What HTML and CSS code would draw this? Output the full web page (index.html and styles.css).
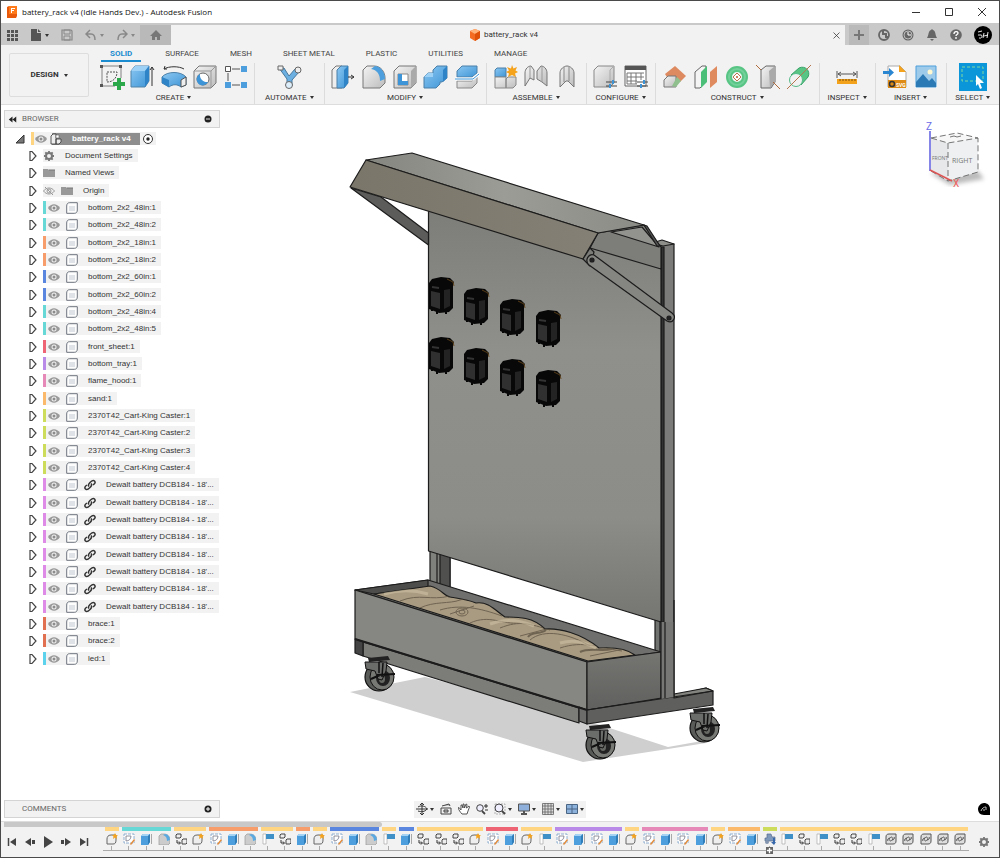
FILE: index.html
```html
<!DOCTYPE html>
<html lang="en">
<head>
  <meta charset="UTF-8">
  <meta name="viewport" content="width=device-width, initial-scale=1.0">
  <title>battery_rack v4 (Idle Hands Dev.) - Autodesk Fusion</title>
  <link rel="stylesheet" href="styles.css">
</head>
<body>

<!-- Icon sprite -->
<svg class="sprite" aria-hidden="true">
  <defs>
    <linearGradient id="blue" x1="0" y1="0" x2="1" y2="1"><stop offset="0" stop-color="#8cc8f2"/><stop offset="1" stop-color="#3d94d6"/></linearGradient>
    <linearGradient id="grey" x1="0" y1="0" x2="1" y2="1"><stop offset="0" stop-color="#f4f4f4"/><stop offset="1" stop-color="#bcbcbc"/></linearGradient>
  </defs>

  <!-- Ribbon tools -->
  <symbol id="sketch" viewBox="0 0 26 26">
    <path d="M4 2h16M4 22h12M3 3v18M22 3v11" fill="none" stroke="#666" stroke-width=".8"/>
    <path d="M8 8h10c0 6-4 10-10 10z" fill="none" stroke="#555" stroke-dasharray="2 1"/>
    <path d="M1 1h3v3H1zM20 1h3v3h-3zM1 20h3v3H1z" fill="#555"/>
    <path d="M18 14h4v4h4v4h-4v4h-4v-4h-4v-4h4z" fill="#2aa84a"/>
  </symbol>
  <symbol id="extrude" viewBox="0 0 26 26">
    <path d="M1 7l4-5h14v15l-4 6H1z" fill="url(#blue)" stroke="#5083a8"/>
    <path d="M1 7l4-5h14l-4 5z" fill="#9dd1f5"/><path d="M15 7l4-5v15l-4 6z" fill="#2f84c8"/>
    <path d="M22 22V3m-2 3l2-3 2 3" fill="none" stroke="#333"/>
  </symbol>
  <symbol id="revolve" viewBox="0 0 26 26">
    <path d="M1 13C6 7 20 7 25 13v8l-5 2c-4-3-8-3-12 0l-7-4z" fill="url(#blue)" stroke="#4a7fa8"/>
    <path d="M1 13l7 3v7l-7-4z" fill="#2f84c8"/><path d="M20 16l5-3v8l-5 2z" fill="#eee" stroke="#555"/>
    <path d="M3 5c5-3 15-3 20 0M3 5l1-3M3 5h3" fill="none" stroke="#333"/>
  </symbol>
  <symbol id="hole" viewBox="0 0 26 26">
    <path d="M2 7l5-5h17v17l-5 5H2z" fill="url(#grey)" stroke="#777"/><path d="M2 7h17v17M19 7l5-5" fill="none" stroke="#999"/>
    <circle cx="11" cy="15" r="6" fill="#fff" stroke="#666"/><path d="M8 10a6 6 0 1 0 8 8 7 7 0 0 1-8-8z" fill="#3d94d6"/>
  </symbol>
  <symbol id="pattern" viewBox="0 0 26 26">
    <path d="M9 5h8M5 9v8M9 21h8" fill="none" stroke="#555"/>
    <path d="M2.500 2.500h5v5h-5z" fill="#fff" stroke="#555"/><path d="M18 2h6v6h-6zM2 18h6v6H2zM18 18h6v6h-6z" fill="#4c9fdc"/>
  </symbol>
  <symbol id="automate" viewBox="0 0 26 26">
    <path d="M3 4h5l5 8 6-7 4 3-7 8v6h-5v-7z" fill="#6cb0e2" stroke="#47789d"/>
    <circle cx="22" cy="6" r="3" fill="#eee" stroke="#666"/><circle cx="13" cy="21" r="3.500" fill="#ddeefb" stroke="#666"/><path d="M2 2h5v4H2z" fill="#eee" stroke="#666"/>
  </symbol>
  <symbol id="presspull" viewBox="0 0 26 26">
    <path d="M2 6l4-4h6v22H2z" fill="#eee" stroke="#777"/><path d="M7 6l4-4h7v17l-4 5H7z" fill="url(#blue)" stroke="#4a7fa8"/>
    <path d="M14 6l4-4v17l-4 5z" fill="#2f84c8"/><path d="M18 13h6m-3-2l3 2-3 2" fill="none" stroke="#333"/>
  </symbol>
  <symbol id="fillet" viewBox="0 0 26 26">
    <path d="M2 6l4-4h7c7 0 11 6 11 12v5l-5 5H2z" fill="url(#grey)" stroke="#777"/>
    <path d="M10 5l4-3c7 1 10 7 10 13l-5 2c0-7-3-11-9-12z" fill="#4c9fdc"/>
  </symbol>
  <symbol id="shell" viewBox="0 0 26 26">
    <path d="M2 7l5-5h17v17l-5 5H2z" fill="url(#grey)" stroke="#777"/><path d="M6 10h10v11H6z" fill="#fff" stroke="#888"/>
    <path d="M6 10l4 0v7h6v4H6z" fill="#3d94d6"/><path d="M19 7l5-5v17l-5 5z" fill="#aaa"/>
  </symbol>
  <symbol id="combine" viewBox="0 0 26 26">
    <path d="M10 6l4-4h10v12l-5 4h-2v2l-4 4H1V13l4-4h5z" fill="url(#blue)" stroke="#4a7fa8"/>
    <path d="M20 6l4-4v12l-4 4z" fill="#2f84c8"/><path d="M1 13l4-4h5v4z" fill="#9dd1f5"/>
  </symbol>
  <symbol id="split" viewBox="0 0 26 26">
    <path d="M3 7l5-5h15v7l-5 4H3z" fill="url(#blue)" stroke="#4a7fa8"/><path d="M3 17h15l5-4v6l-5 5H3z" fill="url(#grey)" stroke="#888"/>
    <path d="M1 15h18l6-5" fill="none" stroke="#fff" stroke-width="3"/><path d="M1 15h18l6-5" fill="none" stroke="#3d94d6"/>
  </symbol>
  <symbol id="newcomp" viewBox="0 0 26 26">
    <path d="M3 6l2-2h9v9H3z" fill="url(#blue)" stroke="#4a7fa8"/><path d="M3 13h11v11H3zM14 15l2-2h8v8l-3 3h-7z" fill="url(#grey)" stroke="#888"/>
    <path d="M20 1l1.500 3.500L25 3l-1.500 3.500L26 8l-3 1.500 1 3.500-4-2-4 2 1-3.500L14 8l3-1.500L15 3l4 1.500z" fill="#f5a21c"/>
  </symbol>
  <symbol id="joint" viewBox="0 0 26 26">
    <path d="M2 22V9c0-4 3-7 6-7l3 4v10l-4-2zM24 22V9c0-4-3-7-6-7l-4 5v8l5 3z" fill="url(#grey)" stroke="#777"/><path d="M7 3v11M19 3v15" stroke="#999"/>
  </symbol>
  <symbol id="asbuilt" viewBox="0 0 26 26">
    <path d="M6 23V9c0-4 4-7 7-7s7 3 7 7v14l-6-6h-2z" fill="url(#grey)" stroke="#777"/><path d="M10 3v15M15 3v14" stroke="#888"/>
  </symbol>
  <symbol id="configbody" viewBox="0 0 26 26">
    <path d="M2 6l4-4h16v17l-4 4H2z" fill="url(#grey)" stroke="#888"/><path d="M18 6v17M18 6l4-4" fill="none" stroke="#aaa"/>
    <path d="M14 18h11M14 22h11" stroke="#444"/><path d="M20 16h2v4h-2zM17 20h2v4h-2z" fill="#3d94d6"/>
  </symbol>
  <symbol id="configtable" viewBox="0 0 26 26">
    <path d="M2 2h21v20H2z" fill="#fff" stroke="#666"/><path d="M2 2h21v4H2z" fill="#555"/>
    <path d="M4 9h17M4 13h17M4 17h10M8 9v11M13 9v11M18 9v7M4 9v11h10" fill="none" stroke="#777"/>
    <path d="M14 18h11M14 22h11" stroke="#444"/><path d="M20 16h2v4h-2zM17 20h2v4h-2z" fill="#3d94d6"/>
  </symbol>
  <symbol id="offsetplane" viewBox="0 0 26 26">
    <path d="M3 10L13 2l11 10-6 6H8z" fill="#dd8a60"/>
    <path d="M2 16l4-4h8v11H2z" fill="url(#grey)" stroke="#777"/><path d="M10 22l5-9 4 4-5 6z" fill="#8fc08e"/>
  </symbol>
  <symbol id="midplane" viewBox="0 0 26 26">
    <path d="M2 8l7-6h4v16l-6 6H2z" fill="#f4f4f4" stroke="#666"/><path d="M8 8l6-6v16l-6 6z" fill="#4bbf78"/><path d="M17 8l7-6v16l-7 6z" fill="#e08a5f"/>
  </symbol>
  <symbol id="torus" viewBox="0 0 26 26">
    <circle cx="13" cy="13" r="8" fill="#f4f4f4" stroke="#58c585" stroke-width="6"/><circle cx="13" cy="13" r="8" fill="none" stroke="#74d09a" stroke-width="2"/>
    <path d="M13 9l4 4-4 4-4-4z" fill="#fff" stroke="#b5764f"/><circle cx="13" cy="13" r="1" fill="#c0532a"/>
  </symbol>
  <symbol id="axis" viewBox="0 0 26 26">
    <path d="M6 6l5-4h9v16l-4 6H6z" fill="url(#grey)" stroke="#666"/><path d="M14 7l6-5v16l-5 6z" fill="#aaa"/><path d="M1 1l5 5M18 18l7 7" stroke="#b06b3c"/>
  </symbol>
  <symbol id="cylaxis" viewBox="0 0 26 26">
    <path d="M5 11l8-7c6-3 12 3 9 9l-7 8z" fill="#58c585" stroke="#3ba269"/><circle cx="10" cy="16" r="6.500" fill="#f2f2f2" stroke="#5b8"/>
    <path d="M1 25L25 1" stroke="#b5764f"/>
  </symbol>
  <symbol id="measure" viewBox="0 0 26 26">
    <path d="M3 7v7M23 7v7M4 10h18M7 8l-3 2 3 2M19 8l3 2-3 2" fill="none" stroke="#555"/><path d="M3 15h20v5H3z" fill="#f2a21b"/>
    <path d="M6 15v2M9 15v2M12 15v2M15 15v2M18 15v2M21 15v2" stroke="#80500a"/>
  </symbol>
  <symbol id="insertsvg" viewBox="0 0 26 26">
    <path d="M6 2h12l6 6v15H6z" fill="#fff" stroke="#aaa"/><path d="M17 1l7 7h-7z" fill="#f5a21c"/><path d="M6 16h18v8H6z" fill="#dd8b14"/>
    <circle cx="10" cy="20" r="2.500" fill="none" stroke="#333" stroke-width="1.500"/>
    <path d="M1 7h6V4l5 4.500L7 13v-3H1z" fill="#2a86d1"/>
  </symbol>
  <symbol id="canvasimg" viewBox="0 0 26 26">
    <path d="M3 2h20v21H3z" fill="#9fcbea" stroke="#4c9fdc"/><circle cx="17" cy="8" r="2.500" fill="#fff8d0"/><path d="M3 18l7-8 6 7 3-3 4 5v4H3z" fill="#2c7ab5"/>
  </symbol>
  <symbol id="select" viewBox="0 0 28 28">
    <path d="M0 0h28v28H0z" fill="#0a96d8"/><path d="M3 4h21v14H3z" fill="none" stroke="#7ed9a0" stroke-dasharray="3 2"/><path d="M17 12l8 8h-4l2 5-2 1-2-5-2 2z" fill="#fff"/>
  </symbol>

  <!-- Title and tab strip -->
  <symbol id="logo" viewBox="0 0 12 12"><path d="M1 1l2-1h8v10l-1 2H1z" fill="#e8590c"/><path d="M3 0h8v8H3z" fill="#ff7a1a"/><path d="M5 7V2h4v1H6v1h2v1H6v2z" fill="#fff"/></symbol>
  <symbol id="cube" viewBox="0 0 12 12"><path d="M6 0l5 2v7l-5 3-5-3V2z" fill="#f36c21"/><path d="M6 0l5 2-5 3-5-3z" fill="#ffb27a"/><path d="M6 5l5-3v7l-5 3z" fill="#dd5208"/></symbol>
  <symbol id="grid" viewBox="0 0 12 12"><path d="M1 1h3v3H1zM5 1h3v3H5zM9 1h3v3H9zM1 5h3v3H1zM5 5h3v3H5zM9 5h3v3H9zM1 9h3v3H1zM5 9h3v3H5zM9 9h3v3H9z" fill="#555"/></symbol>
  <symbol id="file" viewBox="0 0 12 12"><path d="M1 0h6v4h4v8H1zM8 0l3 3H8z" fill="#555"/></symbol>
  <symbol id="save" viewBox="0 0 12 12"><path d="M1 1h9l1 1v9H1z" fill="none" stroke="#888" stroke-width="1.200"/><path d="M3 1h6v4H3zM3 7h6v4H3z" fill="none" stroke="#888"/></symbol>
  <symbol id="undo" viewBox="0 0 12 12"><path d="M5 1L1 5l4 4M1 5h5c3 0 4 2 4 6" fill="none" stroke="#888" stroke-width="1.500"/></symbol>
  <symbol id="redo" viewBox="0 0 12 12"><path d="M7 1l4 4-4 4M11 5H6c-3 0-4 2-4 6" fill="none" stroke="#888" stroke-width="1.500"/></symbol>
  <symbol id="home" viewBox="0 0 12 12"><path d="M6 1l6 6h-2v4H7V8H5v3H2V7H0z" fill="#777"/></symbol>
  <symbol id="ext" viewBox="0 0 12 12"><circle cx="6" cy="6" r="5" fill="none" stroke="#666" stroke-width="1.800"/><path d="M5 2v3h3v3h3" fill="none" stroke="#666" stroke-width="2"/></symbol>
  <symbol id="clock" viewBox="0 0 12 12"><circle cx="6" cy="6" r="5.500" fill="#666"/><circle cx="6" cy="6" r="4" fill="none" stroke="#bbb"/><path d="M6 3v3h3" fill="none" stroke="#fff"/></symbol>
  <symbol id="bell" viewBox="0 0 12 12"><path d="M6 0l1 1c3 1 2 5 4 8H1c2-3 1-7 4-8zM4 10h4l-2 2z" fill="#666"/></symbol>
  <symbol id="help" viewBox="0 0 12 12"><circle cx="6" cy="6" r="5.800" fill="#666"/><path d="M4 5c0-3 4-3 4-1 0 2-2 1-2 3M6 8v2" fill="none" stroke="#fff" stroke-width="1.300"/></symbol>
  <symbol id="avatar" viewBox="0 0 18 18"><circle cx="9" cy="9" r="9" fill="#000"/><path d="M4 6l4-1M4 9h3c2 0 1 4-2 3M10 7l-1 5M14 6l-1 6M10 10l4-1" fill="none" stroke="#fff" stroke-width=".9"/></symbol>
  <symbol id="min" viewBox="0 0 12 12"><path d="M2 6.500h8" stroke="#333"/></symbol>
  <symbol id="max" viewBox="0 0 12 12"><path d="M2.500 2.500h7v7h-7z" fill="none" stroke="#333"/></symbol>
  <symbol id="close" viewBox="0 0 12 12"><path d="M2 2l8 8M10 2l-8 8" stroke="#333"/></symbol>
  <symbol id="plus" viewBox="0 0 12 12"><path d="M6 1v10M1 6h10" stroke="#777" stroke-width="2"/></symbol>

  <!-- Browser tree -->
  <symbol id="collapse" viewBox="0 0 12 12"><path d="M6 2v8L1 6zM11 2v8L6 6z" fill="#222"/></symbol>
  <symbol id="dotminus" viewBox="0 0 12 12"><circle cx="6" cy="6" r="3.500" fill="#222"/><path d="M4 6h4" stroke="#ddd"/></symbol>
  <symbol id="dotplus" viewBox="0 0 12 12"><circle cx="6" cy="6" r="3.500" fill="#222"/><path d="M4 6h4M6 4v4" stroke="#fff"/></symbol>
  <symbol id="closed" viewBox="0 0 12 12"><path d="M3 1.500h2l4 4.500-4 4.500H3z" fill="#fff" stroke="#444" stroke-width="1.200"/></symbol>
  <symbol id="open" viewBox="0 0 12 12"><path d="M10 2v8H2z" fill="#777" stroke="#333"/></symbol>
  <symbol id="eye" viewBox="0 0 12 12"><path d="M0 6c3-5 9-5 12 0-3 5-9 5-12 0z" fill="#999"/><circle cx="6" cy="6" r="2.500" fill="#eee"/><circle cx="6" cy="6" r="1.500" fill="#8c8c8c"/></symbol>
  <symbol id="eyeoff" viewBox="0 0 12 12"><path d="M.5 6c3-4 8-4 11 0-3 4-8 4-11 0zM2 2l8 8" fill="none" stroke="#999"/><circle cx="6" cy="6" r="2" fill="none" stroke="#999"/></symbol>
  <symbol id="gear" viewBox="0 0 12 12"><circle cx="6" cy="6" r="3" fill="none" stroke="#777" stroke-width="2"/><path d="M6 1v1.500M6 9.500V11M1 6h1.500M9.500 6H11M2.300 2.300l1.200 1.200M8.500 8.500l1.200 1.200M9.700 2.300L8.500 3.500M3.500 8.500L2.300 9.700" stroke="#777" stroke-width="1.800"/></symbol>
  <symbol id="folder" viewBox="0 0 12 12"><path d="M0 2h5l1 1h6v7H0z" fill="#999"/><path d="M6 3h6" stroke="#777"/></symbol>
  <symbol id="body" viewBox="0 0 12 12"><path d="M.7 4c0-2 1-3.300 3-3.300h7.600V8c0 2-1 3.300-3 3.300H.7z" fill="#fdfdfd" stroke="#5d6570" stroke-width=".9"/><path d="M3 4h6v5H3z" fill="#dfe3e8"/></symbol>
  <symbol id="assembly" viewBox="0 0 12 12"><path d="M1 3l2-2h3v10H1zM6 6h5v3l-2 2H6z" fill="#eee" stroke="#333" stroke-width=".8"/><path d="M6 2h3v3H6z" fill="#fff" stroke="#666" stroke-width=".6"/></symbol>
  <symbol id="link" viewBox="0 0 12 12"><path d="M5 7.500C3.500 6 5 4.500 6 3.500s3-3 4.500-1.500 0 3-1.500 4M7 4.500C8.500 6 7 7.500 6 8.500s-3 3-4.500 1.500 0-3 1.500-4" fill="none" stroke="#333" stroke-width="1.500"/></symbol>
  <symbol id="radio" viewBox="0 0 12 12"><circle cx="6" cy="6" r="4.500" fill="#fff" stroke="#333"/><circle cx="6" cy="6" r="1.700" fill="#222"/></symbol>

  <!-- Timeline features -->
  <symbol id="t-comp" viewBox="0 0 12 12"><path d="M1 6c0-2 1-4 4-4h5v5c0 3-1 4-3 4H1z" fill="#eee" stroke="#666"/><path d="M9 0l1 2 2 .5-1.500 1L11 6 9 4.500 7 6l.5-2.500L6 2l2 0z" fill="#f5a21c"/></symbol>
  <symbol id="t-sketch" viewBox="0 0 12 12"><path d="M1 1h10v9H1z" fill="#fff" stroke="#7a9fc6" stroke-dasharray="3 1" stroke-width=".8"/><path d="M3 3h5c0 3-2 5-5 5z" fill="none" stroke="#778" stroke-width=".8"/><path d="M7 11l4-5 1 1-4 5z" fill="#e58a36"/></symbol>
  <symbol id="t-extrude" viewBox="0 0 12 12"><path d="M1 3l2-2h7v8l-2 3H1z" fill="#4c9fdc"/><path d="M1 3l2-2h7L8 3z" fill="#a4d3f3"/><path d="M8 3l2-2v8l-2 3z" fill="#2f7db9"/><path d="M11.500 1v10" stroke="#888" stroke-width=".7"/></symbol>
  <symbol id="t-fillet" viewBox="0 0 12 12"><path d="M1 3l2-2h3c4 0 6 3 6 6v3l-2 2H1z" fill="#ccc" stroke="#999" stroke-width=".7"/><path d="M5 2l2-1c3 0 5 3 5 6l-3 1c0-3-1-5-4-6z" fill="#5aa9e0"/></symbol>
  <symbol id="t-flag" viewBox="0 0 12 12"><path d="M1 1h3v10H1z" fill="#fff" stroke="#aaa" stroke-width=".7"/><path d="M4 1h8v5H4z" fill="#4090c8"/></symbol>
  <symbol id="t-copy" viewBox="0 0 12 12"><path d="M1 2l1-1h4v3L5 5H1zM7 7l1-1h4v4l-1 1H7z" fill="#eee" stroke="#444"/><path d="M2 7v3h3m-1-1.500L5.500 10 4 11.500" fill="none" stroke="#333"/></symbol>
  <symbol id="t-link" viewBox="0 0 12 12"><path d="M1 4c0-2 1-3 3-3h7v7c0 2-1 3-3 3H1z" fill="#ddd" stroke="#555"/><path d="M5 7.500C3 7 5 4 7 4M7 4.500c2 .5 0 3.500-2 3.500M3 8c-1-1 0-3 2-3M9 4c1 1 0 3-2 3" fill="none" stroke="#555"/></symbol>
  <symbol id="t-insert" viewBox="0 0 12 12"><path d="M3 1h4l1 3h3v4H1V5h2z" fill="#7f99bd" stroke="#556c8e" stroke-width=".7"/><circle cx="3" cy="9" r="2" fill="#8294ae"/><path d="M9 5v4H7l3 3 2-3h-1V5z" fill="#3768ab"/></symbol>
  <symbol id="marker" viewBox="0 0 8 8"><path d="M0 0h8v8H0z" fill="#666"/><path d="M4 1v6M1 4h6" stroke="#fff" stroke-width="1.500"/></symbol>

  <!-- Playback -->
  <symbol id="p-first" viewBox="0 0 12 12"><path d="M2.500 2v8" stroke="#444" stroke-width="1.500"/><path d="M10 2v8L4 6z" fill="#444"/></symbol>
  <symbol id="p-back" viewBox="0 0 12 12"><path d="M7 2v8L1 6zM8 4h3v4H8z" fill="#444"/></symbol>
  <symbol id="p-play" viewBox="0 0 12 12"><path d="M2 0l9 6-9 6z" fill="#444"/></symbol>
  <symbol id="p-next" viewBox="0 0 12 12"><path d="M5 2v8l6-4zM1 4h3v4H1z" fill="#444"/></symbol>
  <symbol id="p-last" viewBox="0 0 12 12"><path d="M9.500 2v8" stroke="#444" stroke-width="1.500"/><path d="M2 2v8l6-4z" fill="#444"/></symbol>

  <!-- Navigation bar -->
  <symbol id="orbit" viewBox="0 0 12 12"><path d="M6 0v12M0 6h12" stroke="#333"/><path d="M2 4c3-2 8-1 9 2-2 3-6 3-9 2" fill="none" stroke="#333"/><path d="M4 2l2-2 2 2M4 10l2 2 2-2" fill="none" stroke="#333"/></symbol>
  <symbol id="lookat" viewBox="0 0 12 12"><path d="M1 5h10v6H1z" fill="#eee" stroke="#444"/><path d="M2 3l7-2 1 2M4 7h4v2H4z" fill="#ccc" stroke="#444"/></symbol>
  <symbol id="hand" viewBox="0 0 12 12"><path d="M4 11C2 9 1 7 0 5l1-.5L3 7V2h1l1 3V1h1l.5 4L8 1l1 .5L8.500 5 11 3l.5 1L10 8l-1 3z" fill="#fff" stroke="#444" stroke-width=".9"/></symbol>
  <symbol id="zoom" viewBox="0 0 12 12"><circle cx="4" cy="5" r="3.300" fill="#eef" stroke="#444"/><path d="M6 8l3 3" stroke="#444" stroke-width="1.800"/><path d="M8 3h4M10 1v4M9 7h3" stroke="#333"/></symbol>
  <symbol id="zoomwin" viewBox="0 0 12 12"><path d="M1 1h10v10H1z" fill="none" stroke="#999" stroke-dasharray="2 1" stroke-width=".7"/><circle cx="5" cy="5" r="4" fill="#eef" stroke="#444"/><path d="M8 8l3 3" stroke="#444" stroke-width="1.800"/></symbol>
  <symbol id="display" viewBox="0 0 12 12"><path d="M.5 1h11v7H.5z" fill="#8fb0da" stroke="#555"/><path d="M3 11h6M6 8v3" stroke="#555" stroke-width="2"/></symbol>
  <symbol id="gridset" viewBox="0 0 12 12"><path d="M.5.5h11v11H.5zM3 0v12M6 0v12M9 0v12M0 3h12M0 6h12M0 9h12" fill="#ddd" stroke="#666" stroke-width=".8"/></symbol>
  <symbol id="viewports" viewBox="0 0 12 12"><path d="M.5 1.500h11v9H.5zM6 1v10M0 6h12" fill="#8db2dc" stroke="#4b6584"/></symbol>
  <symbol id="assistant" viewBox="0 0 12 12"><path d="M6 0c3 0 6 2 6 6v6H6C2 12 0 9 0 6s3-6 6-6z" fill="#000"/><path d="M3 8c1-3 3-4 5-4v3M5 7h2" fill="none" stroke="#bbb"/></symbol>

  <!-- Model parts -->
  <symbol id="battery" viewBox="0 0 30 40">
    <path d="M1 8l3-4 9-2 9 1 4 4-1 3v23l-4 4-10 1-10-4z" fill="#080808"/>
    <path d="M3 16l9 2v16l-9-3z" fill="#303030"/><path d="M16 15l6-1v17l-6 3z" fill="#232323"/>
    <path d="M4 12l7 1" stroke="#333" stroke-width="2"/><path d="M19 4l6 3 1 4" fill="none" stroke="#5f4218" stroke-width=".9"/>
    <path d="M4 34v2M9 36v3M18 37v2" stroke="#080808" stroke-width="2"/>
  </symbol>
  <symbol id="caster" viewBox="0 0 36 38">
    <path d="M6 3l20-2 2 4-21 2z" fill="#222"/>
    <ellipse cx="17" cy="22" rx="14" ry="14" fill="#595b58" stroke="#111" stroke-width="1.200"/>
    <ellipse cx="20" cy="22" rx="12" ry="13" fill="#777975" stroke="#111"/>
    <ellipse cx="21" cy="23" rx="7" ry="8" fill="#222"/><ellipse cx="20" cy="24" rx="3" ry="4" fill="#676965"/>
    <path d="M3 7h22l-1 9-4 9-4-1-3-8-9-2z" fill="#6b6d6a" stroke="#111"/><path d="M17 7v11M21 8l-1 14" stroke="#111" stroke-width="1.500"/>
    <path d="M15 20l18-1M9 24l9-4" stroke="#111" stroke-width="2"/>
  </symbol>
</svg>

<div class="window">

  <!-- Title bar -->
  <header class="titlebar">
    <svg class="icon"><use href="#logo"/></svg>
    <h1 class="titlebar-text">battery_rack v4 (Idle Hands Dev.) - Autodesk Fusion</h1>
    <button class="win-btn" aria-label="Minimize"><svg class="icon"><use href="#min"/></svg></button>
    <button class="win-btn" aria-label="Maximize"><svg class="icon"><use href="#max"/></svg></button>
    <button class="win-btn" aria-label="Close"><svg class="icon"><use href="#close"/></svg></button>
  </header>

  <!-- Document tabs -->
  <div class="tabstrip">
    <div class="quick">
      <button aria-label="Data panel"><svg class="icon"><use href="#grid"/></svg></button>
      <button aria-label="File"><svg class="icon"><use href="#file"/></svg><span class="caret"></span></button>
      <button aria-label="Save"><svg class="icon"><use href="#save"/></svg></button>
      <button aria-label="Undo"><svg class="icon"><use href="#undo"/></svg><span class="caret light"></span></button>
      <button aria-label="Redo"><svg class="icon"><use href="#redo"/></svg><span class="caret light"></span></button>
    </div>
    <button class="home" aria-label="Home"><svg class="icon"><use href="#home"/></svg></button>
    <div class="doc-tab">
      <span class="doc-name"><svg class="icon"><use href="#cube"/></svg>battery_rack v4</span>
      <button aria-label="Close tab"><svg class="icon small"><use href="#close"/></svg></button>
    </div>
    <button class="new-tab" aria-label="New tab"><svg class="icon"><use href="#plus"/></svg></button>
    <div class="account">
      <button aria-label="Extensions"><svg class="icon"><use href="#ext"/></svg></button>
      <button aria-label="Job status"><svg class="icon"><use href="#clock"/></svg></button>
      <button aria-label="Notifications"><svg class="icon"><use href="#bell"/></svg></button>
      <button aria-label="Help"><svg class="icon"><use href="#help"/></svg></button>
      <button aria-label="Profile"><svg class="avatar"><use href="#avatar"/></svg></button>
    </div>
  </div>

  <!-- Ribbon -->
  <div class="ribbon">
    <button class="workspace">DESIGN <span class="caret"></span></button>
    <div class="ribbon-main">
      <nav class="ribbon-tabs">
        <button class="active">SOLID</button>
        <button>SURFACE</button>
        <button>MESH</button>
        <button>SHEET METAL</button>
        <button>PLASTIC</button>
        <button>UTILITIES</button>
        <button>MANAGE</button>
      </nav>
      <div class="groups" id="groups"></div>
    </div>
  </div>

  <!-- Viewport -->
  <main class="viewport">
    <svg class="model" viewBox="1 105 998 716" role="img" aria-label="Battery rack model">
      <defs>
        <linearGradient id="panel" x1="0" y1="0" x2="0" y2="1"><stop offset="0" stop-color="#7c7c78"/><stop offset=".35" stop-color="#8f908c"/><stop offset=".75" stop-color="#8c8d88"/><stop offset="1" stop-color="#757672"/></linearGradient>
        <linearGradient id="hoodtop" x1="0" y1="0" x2="1" y2="0"><stop offset="0" stop-color="#85867f"/><stop offset=".5" stop-color="#9c9c97"/><stop offset="1" stop-color="#8c8c87"/></linearGradient>
        <linearGradient id="hoodfront" x1="0" y1="0" x2="1" y2="0"><stop offset="0" stop-color="#7b766a"/><stop offset="1" stop-color="#858075"/></linearGradient>
        <linearGradient id="side" x1="0" y1="0" x2="0" y2="1"><stop offset="0" stop-color="#757672"/><stop offset="1" stop-color="#60615e"/></linearGradient>
        <clipPath id="sandclip"><path d="M374 594L430 586c12 3 14 10 20 11s16 2 26 6c12-2 20 8 29 14 14 0 28 0 40 12 14-1 36 4 54 19 16-1 28 1 36 7L588 661z"/></clipPath>
      </defs>

      <!-- ground shadow -->
      <path d="M350 692L425 677 560 712 625 733 668 747 702 741 706 743 668 749 583 762z" fill="#cfcfcf"/>

      <g stroke="#1c1c1c" stroke-width="1.200" stroke-linejoin="round">
        <!-- rear left leg -->
        <path d="M430 550h20v40h-20z" fill="#7f817d"/><path d="M440 553h10v37h-10z" fill="#50514f"/><path d="M437 552v34" fill="none"/>

        <!-- right post -->
        <path d="M655 619h7v36h-7z" fill="#70726f"/>
        <path d="M660 245l5-2 9 1v453l-14 2z" fill="#7b7c79"/><path d="M661 247h3v375h-3z" fill="#333"/>
        <path d="M652 243l10-3 12 4-11 2z" fill="#8e8f8b"/>

        <!-- sheet -->
        <path d="M428.500 205L661 247v375l-232.500-71z" fill="url(#panel)"/>

        <!-- hood -->
        <path d="M351 188l30 9 47.500 36v12z" fill="#5c5d5a"/>
        <path d="M598 233l46-8 17 22v22l-71-21z" fill="#7d7e7a"/>
        <path d="M611 232l31-5 17 20z" fill="#92938f"/>
        <path d="M366 160l46-7 232 72-46 8z" fill="url(#hoodtop)"/>
        <path d="M366 160l232 73-15 26-233-72z" fill="url(#hoodfront)"/>
        <path d="M644 225l3 1 13 20-3 0z" fill="#555"/>

        <!-- brace -->
        <path d="M583 259l7-11 4 4-4 14z" fill="#7b7c78"/>
        <path d="M594 255l78 58c5 4 1 11-5 8l-78-56c-5-5 0-12 5-10z" fill="#858682"/>
        <circle cx="592" cy="260" r="2" fill="#222"/><circle cx="669" cy="318" r="2" fill="#222"/>

        <!-- tray -->
        <path d="M355 590l73-10 233 72-74 10z" fill="#6f706d"/>
        <path d="M355 590l73-10v7l-54 7z" fill="#4d4e4c"/>
        <path d="M374 594L430 586c12 3 14 10 20 11s16 2 26 6c12-2 20 8 29 14 14 0 28 0 40 12 14-1 36 4 54 19 16-1 28 1 36 7L588 661z" fill="#a99b82"/>
        <g clip-path="url(#sandclip)" fill="none" stroke="#5d5242" stroke-width="1" opacity=".75">
          <path d="M400 601c20-8 30 0 50-5M420 608c14-7 30-4 40-8s20 4 28 3M440 610c20-6 40-2 62 6M470 623c20-9 32 2 50 0M500 628c20-8 30-4 50 2M530 640c14-12 40-6 60 6M560 648c24-8 40 0 62 3M450 614l24-8M520 636l34-9M590 656l34-7"/>
          <ellipse cx="462" cy="612" rx="6" ry="4"/><ellipse cx="462" cy="612" rx="3" ry="2"/><path d="M528 637c4-6 12-2 18-7M580 652c10-5 20 0 32-3" stroke-width="2"/>
        </g>
        <g clip-path="url(#sandclip)" fill="none" stroke="#cdbfa2" stroke-width="3" opacity=".6"><path d="M384 594c14-4 30-4 44 0M490 624c16-6 30-4 44 2M560 643c14-4 24-1 36 5"/></g>
        <path d="M363 642l216 66v15l-216-67z" fill="#7c7d79"/>
        <path d="M355 590l232 72v48l-232-71z" fill="#868782"/>
        <path d="M587 662l74-10v47l-74 11z" fill="url(#side)"/>

        <!-- base frame -->
        <path d="M355 639l8 3v14l-8-3z" fill="#444"/>
        <path d="M579 707l8 3v14l-8-3z" fill="#6c6d6a"/>
        <path d="M587 710l87-14 32-8 7 3v14l-126 19z" fill="#5f605d"/>
        <path d="M674 694l32-6 7 3-39 7z" fill="#83847f"/><path d="M587 710l126-19" fill="none"/>
        <path d="M661 622h13v75l-13 2z" fill="#777875" stroke="none"/><path d="M661 622v77M665 622v76M674 600v97" fill="none"/>
        <path d="M355 639l232 71" fill="none" stroke-width="2"/>
      </g>

      <!-- casters -->
      <use href="#caster" x="362" y="655" width="36" height="38"/>
      <use href="#caster" x="583" y="723" width="36" height="38"/>
      <use href="#caster" x="687" y="706" width="36" height="38"/>

      <!-- batteries -->
      <use href="#battery" x="428" y="275" width="30" height="40"/>
      <use href="#battery" x="463" y="286" width="30" height="40"/>
      <use href="#battery" x="499" y="297" width="30" height="40"/>
      <use href="#battery" x="535" y="308" width="30" height="40"/>
      <use href="#battery" x="428" y="335" width="30" height="40"/>
      <use href="#battery" x="463" y="346" width="30" height="40"/>
      <use href="#battery" x="499" y="357" width="30" height="40"/>
      <use href="#battery" x="535" y="368" width="30" height="40"/>
    </svg>

    <section class="browser">
      <header class="panel-head">
        <button aria-label="Collapse browser"><svg class="icon small"><use href="#collapse"/></svg></button>
        <h2>BROWSER</h2>
        <button aria-label="Browser options"><svg class="icon"><use href="#dotminus"/></svg></button>
      </header>
      <ul class="tree" id="tree"></ul>
    </section>

    <!-- View cube -->
    <svg class="viewcube" viewBox="0 0 72 74" role="img" aria-label="View cube">
      <defs><filter id="soft"><feGaussianBlur stdDeviation="2"/></filter></defs>
      <path d="M10 54l20 12 34-6-6-8z" fill="#bbb" filter="url(#soft)"/>
      <path d="M11 19l17 5v38L11 52z" fill="#e6e8ea"/><path d="M28 24l30-5v34l-30 9z" fill="#eef0f1"/><path d="M11 19l26-5 21 5-30 5z" fill="#f7f7f7"/>
      <path d="M11 19l26-5 21 5-30 5zM28 24v38l30-9V19M11 52l17 10" fill="none" stroke="#666" stroke-dasharray="6 3" stroke-width=".9"/>
      <path d="M30 18l4-1 3 1 4-1" fill="none" stroke="#777"/>
      <path d="M10 12v40" stroke="#5d5de0" stroke-width="1.500"/><path d="M10 51l22 11" stroke="#dd5555" stroke-width="1.500"/>
      <text class="face" x="12" y="41" font-size="5">FRONT</text>
      <text class="face" x="32" y="44" font-size="7">RIGHT</text>
      <text class="axis-z" x="6" y="11">Z</text><text class="axis-x" x="33" y="68">X</text>
    </svg>

    <div class="bottom">
      <section class="panel-head comments">
        <h2>COMMENTS</h2>
        <button aria-label="Add comment"><svg class="icon"><use href="#dotplus"/></svg></button>
      </section>
      <nav class="navbar" id="navbar"></nav>
      <button class="assistant" aria-label="Assistant"><svg class="icon"><use href="#assistant"/></svg></button>
    </div>
  </main>

  <!-- Timeline -->
  <footer class="timeline">
    <div class="scroll"><div class="thumb"></div></div>
    <div class="timeline-row">
      <div class="player">
        <button aria-label="First"><svg class="icon"><use href="#p-first"/></svg></button>
        <button aria-label="Previous"><svg class="icon"><use href="#p-back"/></svg></button>
        <button aria-label="Play"><svg class="icon"><use href="#p-play"/></svg></button>
        <button aria-label="Next"><svg class="icon"><use href="#p-next"/></svg></button>
        <button aria-label="Last"><svg class="icon"><use href="#p-last"/></svg></button>
      </div>
      <div class="steps" id="steps"></div>
      <button class="settings" aria-label="Timeline settings"><svg class="icon"><use href="#gear"/></svg></button>
    </div>
  </footer>
</div>

<script src="script.js"></script>
</body>
</html>
```

FILE: styles.css
```css
/* Base */
* {
  box-sizing: border-box;
}

body {
  margin: 0;
  font-family: Roboto, "Liberation Sans", sans-serif;
  font-size: 8px;
  line-height: 12px;
  color: #333;
}

button {
  display: flex;
  align-items: center;
  justify-content: center;
  padding: 0;
  border: none;
  background: none;
  font: inherit;
  color: inherit;
}

h1, h2 {
  margin: 0;
  font-size: 8px;
  font-weight: 400;
}

.sprite {
  position: absolute;
  width: 0;
  height: 0;
}

.icon {
  display: block;
  flex: none;
  width: 12px;
  height: 12px;
}

.icon.small {
  width: 9px;
  height: 9px;
}

.caret {
  flex: none;
  border: 2px solid transparent;
  border-top: 3px solid #333;
  border-bottom: 0;
}

.caret.light {
  border-top-color: #888;
}

.window {
  display: flex;
  flex-direction: column;
  height: 100vh;
  border: 1px solid #4a4a4a;
  background: #fff;
}

/* Title bar */
.titlebar {
  display: flex;
  align-items: center;
  height: 22px;
  padding: 0 1px 0 5px;
}

.titlebar-text {
  flex: 1;
  margin-left: 4px;
  font-family: "Open Sans", sans-serif;
  color: #111;
}

.win-btn {
  width: 33px;
  height: 22px;
}

/* Document tabs */
.tabstrip {
  display: flex;
  height: 22px;
  padding-top: 2px;
  background: #c9c9c9;
}

.quick {
  display: flex;
  align-items: center;
  gap: 12px;
  width: 139px;
  padding-left: 5px;
}

.quick button {
  gap: 3px;
}

.home {
  width: 31px;
  background: #b9b9b9;
}

.doc-tab {
  display: flex;
  flex: 1;
  align-items: center;
  padding: 0 4px;
  background: #f2f2f2;
}

.doc-name {
  display: flex;
  flex: 1;
  align-items: center;
  justify-content: center;
  gap: 3px;
}

.new-tab {
  width: 20px;
  margin: 0 4px;
  background: #bababa;
}

.account {
  display: flex;
  align-items: center;
  gap: 12px;
  padding: 0 7px 0 5px;
}

.avatar {
  width: 18px;
  height: 18px;
}

/* Ribbon */
.ribbon {
  display: flex;
  height: 60px;
  background: #f2f2f2;
  border-bottom: 1px solid #ddd;
}

.workspace {
  gap: 5px;
  width: 80px;
  height: 44px;
  margin: 8px 7px 0 8px;
  border: 1px solid #ddd;
  border-radius: 2px;
  font-weight: 700;
}

.ribbon-main {
  flex: 1;
}

.ribbon-tabs {
  display: flex;
  gap: 31px;
  height: 17px;
  padding-left: 5px;
  color: #444;
}

.ribbon-tabs button {
  padding-top: 2px;
  border-bottom: 2px solid transparent;
}

.ribbon-tabs .active {
  padding: 2px 9px 0;
  margin-right: -7px;
  border-bottom-color: #1a8ccf;
  font-weight: 700;
  color: #1a8ccf;
}

.groups {
  display: flex;
}

.group {
  display: flex;
  flex-direction: column;
  align-items: center;
  min-width: 52px;
  margin-top: 1px;
  padding: 0 3px;
  border-right: 1px solid #dcdcdc;
}

.group:first-child {
  padding-left: 0;
}

.group:last-child {
  flex: 1;
  padding: 0;
  border-right: none;
}

.group.wide {
  padding: 0 10px;
}

.group.mid {
  padding: 0 8px;
}

.group.roomy {
  padding: 0 4px;
}

.tools {
  display: flex;
}

.tools button {
  position: relative;
  width: 31px;
  height: 28px;
}

.tool {
  width: 26px;
  height: 26px;
}

.tool.big {
  width: 28px;
  height: 28px;
}

.file-type {
  position: absolute;
  right: 5px;
  bottom: 3px;
  font-size: 5px;
  font-weight: 700;
  line-height: 6px;
  color: #fff;
}

.group-name {
  gap: 3px;
  height: 13px;
}

/* Viewport */
.viewport {
  position: relative;
  display: flex;
  flex: 1;
  flex-direction: column;
  justify-content: space-between;
  min-height: 0;
  padding: 5px 3px 3px;
}

.model {
  position: absolute;
  inset: 0;
  width: 100%;
  height: 100%;
}

.viewcube {
  position: absolute;
  top: 14px;
  right: 7px;
  width: 72px;
  height: 74px;
}

.face {
  font-family: "Open Sans", sans-serif;
  fill: #777;
}

.axis-z,
.axis-x {
  font-size: 10px;
  fill: #6a6ae6;
}

.axis-x {
  fill: #ee5c5c;
}

/* Browser */
.browser {
  position: relative;
  width: 216px;
}

.panel-head {
  display: flex;
  align-items: center;
  width: 216px;
  height: 18px;
  padding: 0 5px 0 3px;
  border: 1px solid #d4d4d4;
  background: #f2f2f2;
}

.panel-head h2 {
  flex: 1;
  margin-left: 5px;
  color: #666;
}

.comments h2 {
  margin-left: 14px;
}

.tree {
  margin: 4px 0 0;
  padding: 0;
  list-style: none;
  font-family: "Liberation Sans", Arial, sans-serif;
}

.row {
  display: flex;
  align-items: center;
  height: 13px;
  margin-bottom: 4px;
  padding-left: 23px;
  white-space: nowrap;
}

.row:nth-child(3n) {
  margin-bottom: 5px;
}

.row.root {
  padding-left: 10px;
}

.row-body {
  display: flex;
  align-items: center;
  gap: 6px;
  height: 13px;
  margin-left: 4px;
  padding-right: 5px;
  background: #f2f2f2;
}

.row-body .label {
  margin-left: 4px;
}

.root .row-body {
  gap: 5px;
  margin-left: 5px;
  padding-right: 2px;
}

.root .label {
  display: flex;
  align-items: center;
  gap: 10px;
  height: 12px;
  margin: 0;
  padding: 0 9px 0 1px;
  background: #8e8e8e;
  font-weight: 700;
  color: #fff;
}

.root .icon:last-child {
  margin-left: -3px;
}

.bar {
  width: 3px;
  height: 13px;
  margin-right: -4px;
}

.plain .bar {
  width: 0;
  margin-right: -6px;
}

/* Colours shared by the tree and the timeline */
.yellow { background: #ffd582; }
.cyan { background: #68d8d6; }
.orange { background: #f79c6b; }
.blue { background: #5a86e0; }
.red { background: #ef6475; }
.purple { background: #b98ae8; }
.pink { background: #e789b8; }
.sand { background: #fbb96c; }
.lime { background: #cddc5a; }
.violet { background: #dd8be6; }
.rust { background: #e07050; }
.sky { background: #5cd2ec; }

/* Bottom of the viewport */
.bottom {
  position: relative;
  display: flex;
  align-items: center;
  justify-content: space-between;
}

.navbar {
  display: flex;
  align-items: center;
  gap: 6px;
  height: 17px;
  margin-right: 198px;
  padding: 0 2px;
  background: #f2f2f2;
}

.navbar button {
  gap: 2px;
}

.assistant {
  margin-right: 6px;
}

/* Timeline */
.timeline {
  height: 36px;
  border-top: 1px solid #ddd;
  background: #f2f2f2;
}

.scroll {
  height: 5px;
  padding-left: 3px;
}

.thumb {
  width: 38%;
  height: 5px;
  border-radius: 0 3px 3px 0;
  background: #c8c8c8;
}

.timeline-row {
  display: flex;
  align-items: flex-start;
}

.player {
  display: flex;
  gap: 6px;
  width: 102px;
  padding: 9px 0 0 5px;
}

.steps {
  display: flex;
  flex: 1;
}

.step-group {
  display: flex;
  flex-wrap: wrap;
}

.step-color {
  width: 100%;
  height: 4px;
  margin: 0 1px 2px 2px;
}

.step {
  position: relative;
  display: flex;
  flex: 1;
  flex-direction: column;
  align-items: center;
}

.tick {
  align-self: stretch;
  height: 5px;
  margin-top: 1px;
  border-bottom: 1px solid #aaa;
  background: linear-gradient(#aaa, #aaa) center / 1px 100% no-repeat;
}

/* Current position in the timeline */
.marker {
  position: absolute;
  bottom: -3px;
  width: 7px;
  height: 7px;
}

.settings {
  width: 30px;
  height: 30px;
}
```

FILE: script.js
```javascript
function icon(id, cls = 'icon') {
  return `<svg class="${cls}"><use href="#${id}"/></svg>`;
}

// Ribbon groups: name, tools, extra class
const groups = [
  ['CREATE', ['sketch', 'extrude', 'revolve', 'hole', 'pattern'], ''],
  ['AUTOMATE', ['automate'], 'wide'],
  ['MODIFY', ['presspull', 'fillet', 'shell', 'combine', 'split'], ''],
  ['ASSEMBLE', ['newcomp', 'joint', 'asbuilt'], ''],
  ['CONFIGURE', ['configbody', 'configtable'], ''],
  ['CONSTRUCT', ['offsetplane', 'midplane', 'torus', 'axis', 'cylaxis'], 'roomy'],
  ['INSPECT', ['measure'], 'mid'],
  ['INSERT', ['insertsvg', 'canvasimg'], 'roomy'],
  ['SELECT', ['select'], '']
];

function tool(id) {
  const label = id === 'insertsvg' ? '<span class="file-type">SVG</span>' : '';
  return `<button aria-label="${id}">${icon(id, id === 'select' ? 'tool big' : 'tool')}${label}</button>`;
}

document.getElementById('groups').innerHTML = groups.map(([name, tools, cls]) => `
  <div class="group ${cls}">
    <div class="tools">${tools.map(tool).join('')}</div>
    <button class="group-name">${name}<span class="caret"></span></button>
  </div>`).join('');

// Browser tree
const battery = "Dewalt battery DCB184 - 18'...";
const parts = [
  ['bottom_2x2_48in:1', 'cyan'], ['bottom_2x2_48in:2', 'cyan'],
  ['bottom_2x2_18in:1', 'orange'], ['bottom_2x2_18in:2', 'orange'],
  ['bottom_2x2_60in:1', 'blue'], ['bottom_2x2_60in:2', 'blue'],
  ['bottom_2x2_48in:4', 'cyan'], ['bottom_2x2_48in:5', 'cyan'],
  ['front_sheet:1', 'red'], ['bottom_tray:1', 'purple'],
  ['flame_hood:1', 'pink'], ['sand:1', 'sand'],
  ['2370T42_Cart-King Caster:1', 'lime'], ['2370T42_Cart-King Caster:2', 'lime'],
  ['2370T42_Cart-King Caster:3', 'lime'], ['2370T42_Cart-King Caster:4', 'lime'],
  ...Array(8).fill([battery, 'violet', true]),
  ['brace:1', 'rust'], ['brace:2', 'rust'], ['led:1', 'sky']
];

function row(cls, color, icons, label) {
  return `<li class="row ${cls}">${icon('closed')}
    <div class="row-body"><span class="bar ${color}"></span>${icons.map(i => icon(i)).join('')}<span class="label">${label}</span></div></li>`;
}

document.getElementById('tree').innerHTML =
  `<li class="row root">${icon('open')}
    <div class="row-body"><span class="bar yellow"></span>${icon('eye')}<span class="label">${icon('assembly')}battery_rack v4</span>${icon('radio')}</div></li>` +
  row('plain', '', ['gear'], 'Document Settings') +
  row('plain', '', ['folder'], 'Named Views') +
  row('plain', '', ['eyeoff', 'folder'], 'Origin') +
  parts.map(([name, color, linked]) => row('', color, linked ? ['eye', 'body', 'link'] : ['eye', 'body'], name)).join('');

// Navigation bar: icon, has menu
const nav = [['orbit', 1], ['lookat', 0], ['hand', 0], ['zoom', 0], ['zoomwin', 1], ['display', 1], ['gridset', 1], ['viewports', 1]];
document.getElementById('navbar').innerHTML = nav.map(([id, menu]) =>
  `<button aria-label="${id}">${icon(id)}${menu ? '<span class="caret"></span>' : ''}</button>`).join('');

// Timeline features, grouped by component colour
const steps = [
  ['yellow', 'comp'], ['cyan', 'sketch extrude fillet'], ['yellow', 'copy comp'],
  ['orange', 'sketch extrude fillet'], ['yellow', 'flag copy'], ['orange', 'extrude'],
  ['yellow', 'comp'], ['blue', 'sketch extrude fillet'], ['yellow', 'flag'], ['blue', 'extrude'],
  ['yellow', 'copy copy copy comp'], ['red', 'sketch extrude'], ['yellow', 'comp flag'],
  ['purple', 'sketch extrude sketch extrude'], ['yellow', 'comp'],
  ['pink', 'sketch extrude sketch extrude'], ['yellow', 'comp'], ['sand', 'sketch extrude'],
  ['lime', 'insert'], ['yellow', 'flag copy flag copy copy flag link link link link link']
];

document.getElementById('steps').innerHTML = steps.map(([color, list]) => {
  const items = list.split(' ');
  return `<div class="step-group" style="flex: ${items.length} 1 0">
    <div class="step-color ${color}"></div>
    ${items.map(i => `<button class="step" aria-label="${i}">${icon('t-' + i)}<span class="tick"></span>${i === 'insert' ? icon('marker', 'marker') : ''}</button>`).join('')}
  </div>`;
}).join('');
```
